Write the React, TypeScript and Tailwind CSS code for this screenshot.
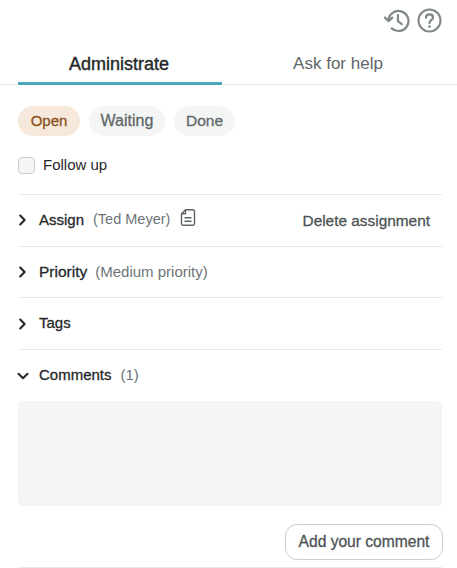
import React from "react";

const Chevron = ({ open = false }: { open?: boolean }) => (
  <svg width="12" height="12" viewBox="0 0 12 12" fill="none" stroke="#25282a" strokeWidth="2.1" strokeLinecap="round" strokeLinejoin="round" className="-ml-[1px] shrink-0">
    {open ? <path d="M1.5 3.8 6 8.2l4.5-4.4" /> : <path d="M3.2 1.5 7.6 6l-4.4 4.5" />}
  </svg>
);

const Row = ({ children, open = false, last = false }: { children: React.ReactNode; open?: boolean; last?: boolean }) => (
  <div className={last ? "flex h-[51px] items-center" : "flex h-[51.7px] items-center border-b border-[#e8eaea]"}>
    <div className="flex w-[21px] items-center justify-start"><Chevron open={open} /></div>
    {children}
  </div>
);

export default function App() {
  return (
    <div className="h-[568px] w-[457px] overflow-hidden bg-white font-['Liberation_Sans',sans-serif] text-[16px] text-[#25282a]">
      <div className="flex h-[40px] items-start justify-end gap-[7px] pr-[15px] pt-[8px]">
        <svg width="26" height="25" viewBox="0 0 27 25" fill="none" stroke="#7f8789" strokeWidth="2.3" strokeLinecap="round" strokeLinejoin="round">
          <path d="M4.6 12.5a10.4 10.4 0 1 1 3.4 8.2" />
          <path d="M1 9.5l3.6 3.6 4-3.6" />
          <path d="M14.5 7v6.2l4 3" />
        </svg>
        <svg width="25" height="25" viewBox="0 0 25 25" fill="none" stroke="#7f8789" strokeWidth="2">
          <circle cx="12.5" cy="12.5" r="11" />
          <path d="M9 9.7c0-2 1.5-3.3 3.5-3.3s3.5 1.3 3.5 3.1c0 2.7-3.5 2.7-3.5 5.6" strokeLinecap="round" strokeWidth="2.2" />
          <circle cx="12.5" cy="18.6" r="1.3" fill="#7f8789" stroke="none" />
        </svg>
      </div>

      <div className="flex h-[45px] border-b border-[#e8eaea] pl-[18px]">
        <div className="-mb-px flex h-[45px] w-[204px] items-center justify-center border-b-[3px] border-[#4ba6bc] pt-[6px] text-[18px] font-medium [-webkit-text-stroke:0.4px_#25282a]">
          <span className="-translate-x-[1px]">Administrate</span>
        </div>
        <div className="flex h-[44px] w-[232px] items-center justify-center pt-[4px] text-[17px] text-[#5f6668]">
          Ask for help
        </div>
      </div>

      <div className="mt-[21px] flex gap-[9px] pl-[18px]">
        <span className="flex h-[30px] w-[62px] items-center justify-center rounded-full bg-[#f6e8da] text-[15px] text-[#8a5224] [-webkit-text-stroke:0.3px_#8a5224]">Open</span>
        <span className="flex h-[30px] w-[76px] items-center justify-center rounded-full bg-[#f4f6f5] text-[16px] text-[#5f6668] [-webkit-text-stroke:0.3px_#5f6668]">Waiting</span>
        <span className="flex h-[30px] w-[61px] items-center justify-center rounded-full bg-[#f4f6f5] text-[15.5px] text-[#5f6668] [-webkit-text-stroke:0.3px_#5f6668]">Done</span>
      </div>

      <div className="mt-[20px] flex items-center gap-[8px] pl-[18px]">
        <span className="h-[17px] w-[17px] rounded-[4px] border border-[#c9cdce] bg-[#f4f6f5]" />
        <span className="text-[15px] leading-[18px]">Follow up</span>
      </div>

      <div className="mx-[18px] mt-[20px] w-[424px] border-t border-[#e8eaea]">
        <Row>
          <span className="text-[15px] [-webkit-text-stroke:0.3px_#25282a]">Assign</span>
          <span className="ml-[9px] text-[14.5px] text-[#6d7476]">(Ted Meyer)</span>
          <svg width="16" height="19" viewBox="0 0 16 18" fill="none" stroke="#5f6668" strokeWidth="1.4" strokeLinejoin="round" className="mb-[5px] ml-[10px]">
            <path d="M5.5 1.2h7.3a1.7 1.7 0 0 1 1.7 1.7v12.2a1.7 1.7 0 0 1-1.7 1.7H3.2a1.7 1.7 0 0 1-1.7-1.7V5.2z" />
            <path d="M5.5 1.2v4h-4" />
            <path d="M4.5 9.3h7M4.5 12.8h7" />
          </svg>
          <span className="ml-auto mr-[12px] text-[15.4px] text-[#4d5355] [-webkit-text-stroke:0.3px_#4d5355]">Delete assignment</span>
        </Row>
        <Row>
          <span className="text-[15.5px] [-webkit-text-stroke:0.3px_#25282a]">Priority</span>
          <span className="ml-[8px] text-[15px] text-[#6d7476]">(Medium priority)</span>
        </Row>
        <Row>
          <span className="text-[15px] [-webkit-text-stroke:0.3px_#25282a]">Tags</span>
        </Row>
        <Row open last>
          <span className="text-[15px] [-webkit-text-stroke:0.3px_#25282a]">Comments</span>
          <span className="ml-[9px] text-[15px] text-[#6d7476]">(1)</span>
        </Row>
        <div className="h-[105px] rounded-[4px] bg-[#f4f6f5]" />
        <div className="mt-[18px] flex justify-end">
          <button className="-mr-px flex h-[36px] w-[158px] items-center justify-center rounded-[12px] border border-[#c9cdce] bg-white text-[15.6px] text-[#4d5355] [-webkit-text-stroke:0.3px_#4d5355]">
            Add your comment
          </button>
        </div>
        <div className="mt-[7px] border-t border-[#e8eaea]" />
      </div>
    </div>
  );
}
